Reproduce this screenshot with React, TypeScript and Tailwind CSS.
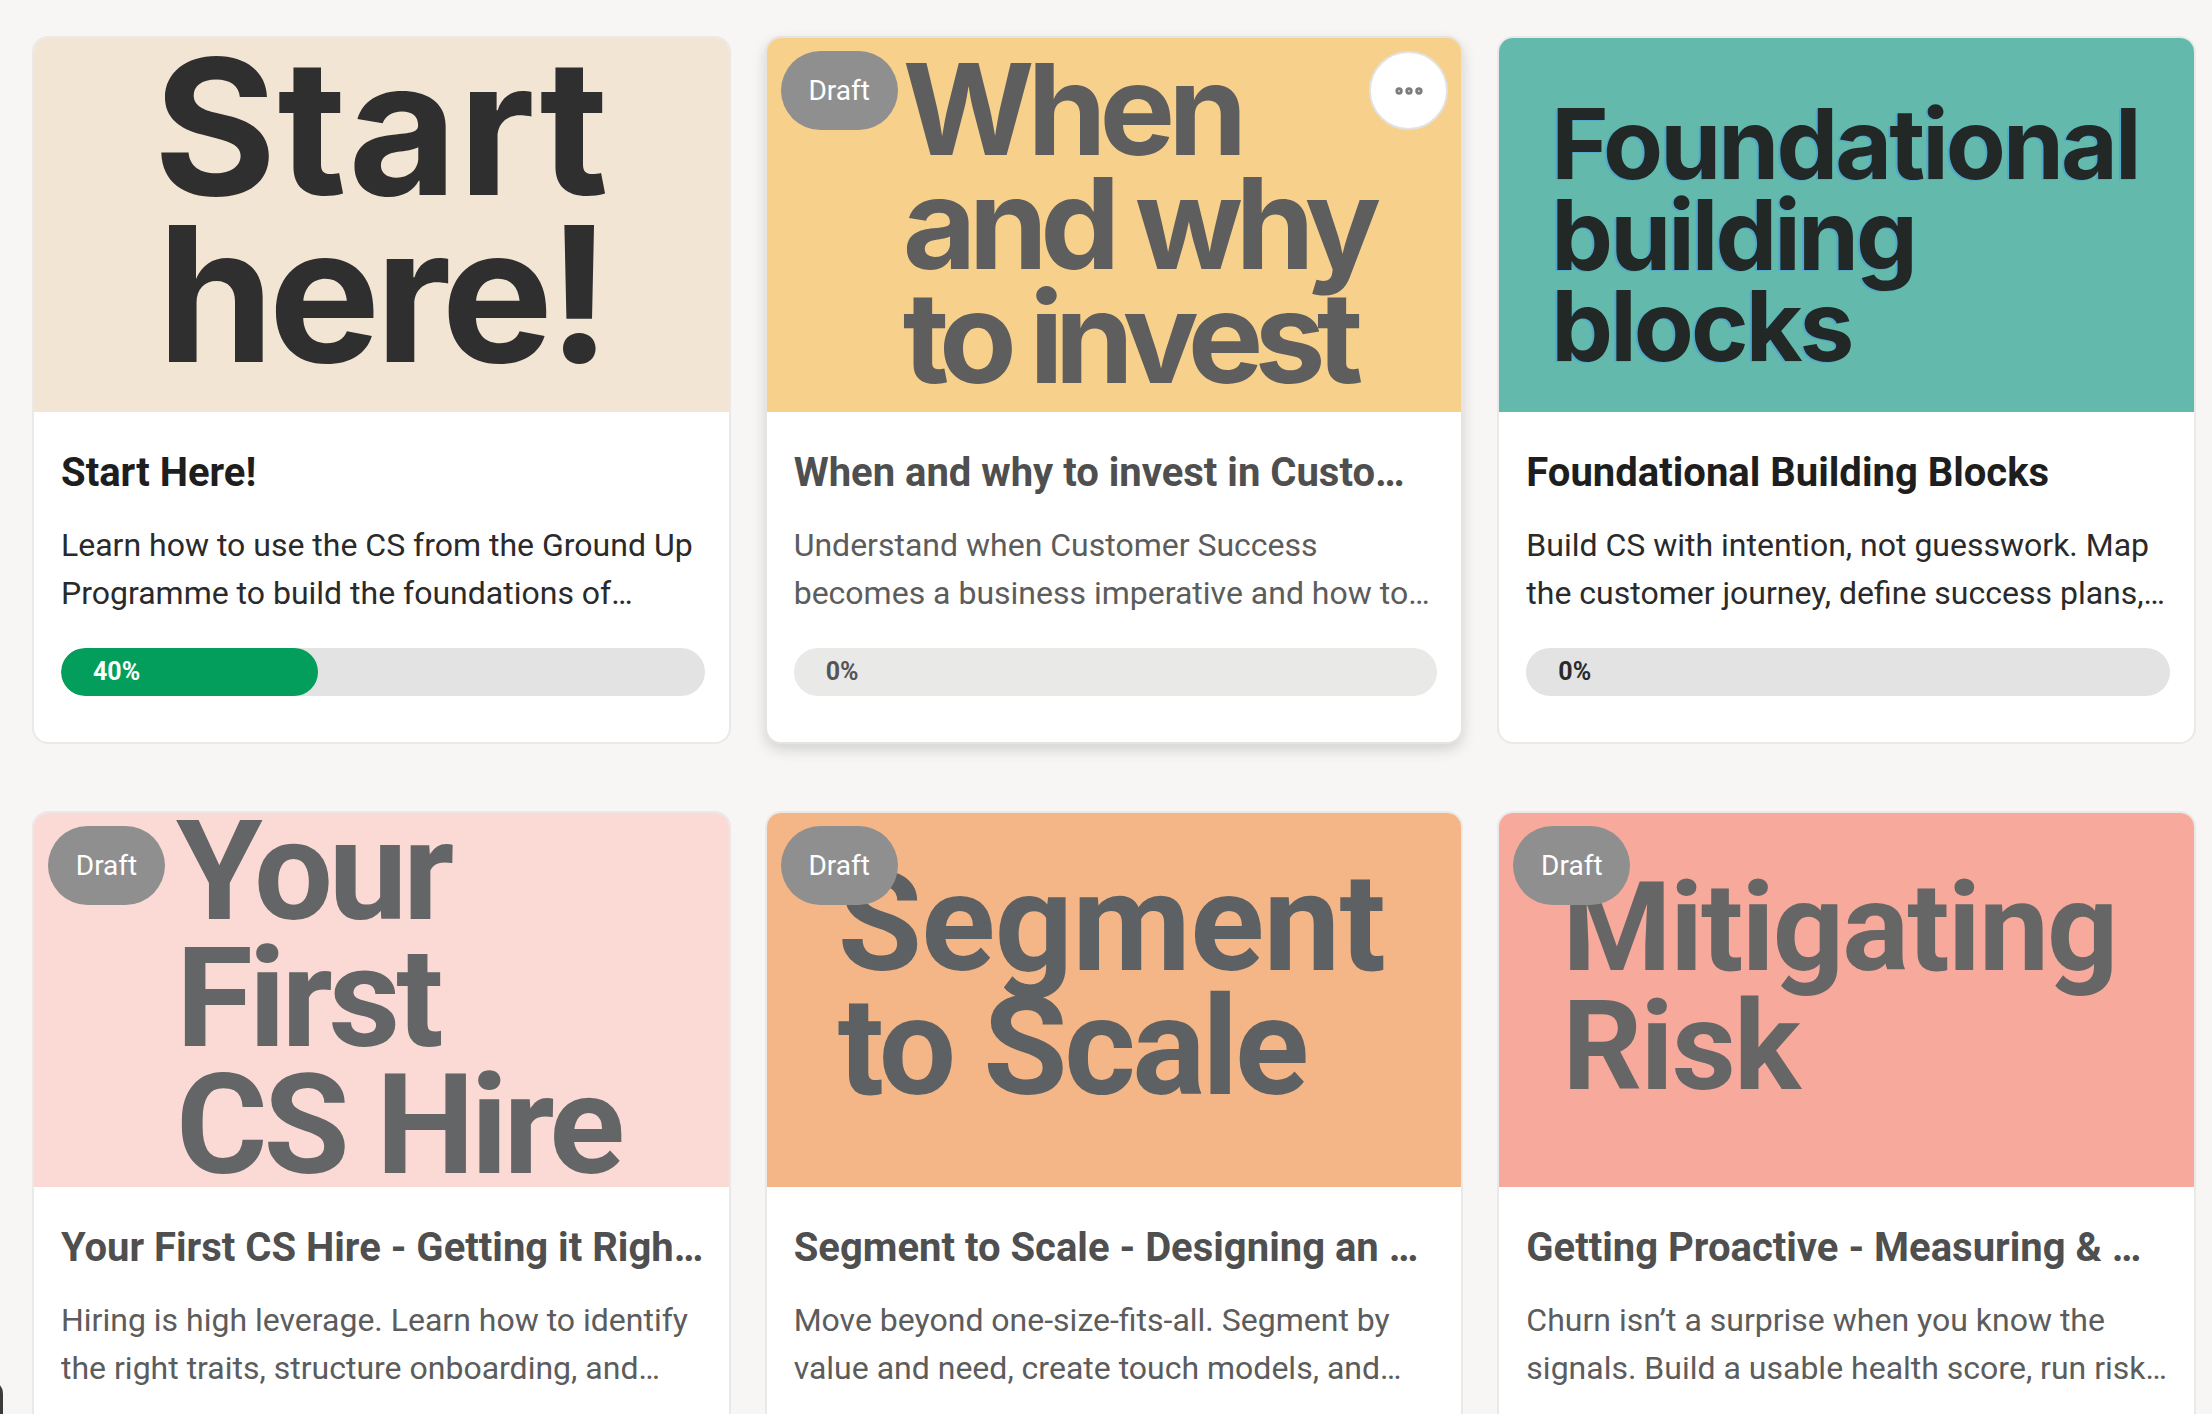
import { MoreHorizontal } from "lucide-react";

type Course = {
  title: string;
  desc: string;
  progress: number;
  draft: boolean;
  menu?: boolean;
  bg: string;
  lines: [string, string][];
  art: string;
};

const courses: Course[] = [
  {
    title: "Start Here!",
    desc: "Learn how to use the CS from the Ground Up Programme to build the foundations of\u2026",
    progress: 40,
    draft: false,
    bg: "bg-[#f3e5d4]",
    lines: [
      ["Start", "tracking-[0.005em]"],
      ["here!", ""],
    ],
    art: "pt-[5px] text-center font-['Inter'] text-[188px] leading-[167px] font-bold tracking-[-0.03em] text-[#2f2f2f]",
  },
  {
    title: "When and why to invest in Customer Success",
    desc: "Understand when Customer Success becomes a business imperative and how to\u2026",
    progress: 0,
    draft: true,
    menu: true,
    bg: "bg-[#f7d08b]",
    lines: [
      ["When", ""],
      ["and why", "tracking-[-0.06em]"],
      ["to invest", "tracking-[-0.07em]"],
    ],
    art: "pt-[14px] pl-[136px] font-['Inter'] text-[127px] leading-[114px] font-bold tracking-[-0.055em] text-[#5e5e5e]",
  },
  {
    title: "Foundational Building Blocks",
    desc: "Build CS with intention, not guesswork. Map the customer journey, define success plans,\u2026",
    progress: 0,
    draft: false,
    bg: "bg-[#62b9ac]",
    lines: [
      ["Foundational", ""],
      ["building", ""],
      ["blocks", ""],
    ],
    art: "pt-[60px] pl-[52px] font-['Inter'] text-[98px] leading-[91px] font-bold tracking-[-0.03em] text-[#222826] [text-shadow:-2px_1px_0_#52a9cc]",
  },
  {
    title: "Your First CS Hire - Getting it Right the First Time",
    desc: "Hiring is high leverage. Learn how to identify the right traits, structure onboarding, and\u2026",
    progress: 0,
    draft: true,
    bg: "bg-[#fbdad5]",
    lines: [
      ["Your", ""],
      ["First", ""],
      ["CS Hire", ""],
    ],
    art: "-mt-[5px] pl-[142px] font-['Roboto'] text-[140px] leading-[127px] font-bold tracking-[-0.03em] text-[#636566]",
  },
  {
    title: "Segment to Scale - Designing an Engagement Model",
    desc: "Move beyond one-size-fits-all. Segment by value and need, create touch models, and\u2026",
    progress: 0,
    draft: true,
    bg: "bg-[#f5b687]",
    lines: [
      ["Segment", ""],
      ["to Scale", "tracking-[-0.025em]"],
    ],
    art: "pt-[48px] pl-[71px] font-['Roboto'] text-[137px] leading-[124px] font-bold tracking-[-0.005em] text-[#5e6163]",
  },
  {
    title: "Getting Proactive - Measuring & Mitigating Risk",
    desc: "Churn isn\u2019t a surprise when you know the signals. Build a usable health score, run risk\u2026",
    progress: 0,
    draft: true,
    bg: "bg-[#f7a99c]",
    lines: [
      ["Mitigating", ""],
      ["Risk", ""],
    ],
    art: "pt-[55px] pl-[63px] font-['Roboto'] text-[125px] leading-[119px] font-bold tracking-[-0.015em] text-[#666666]",
  },
];

function ProgressBar({ value, draft }: { value: number; draft: boolean }) {
  return (
    <div
      className={
        "relative flex h-[48px] w-full items-center overflow-hidden rounded-full pl-[32px] " +
        (draft ? "bg-[#e9e9e8]" : "bg-[#e3e3e3]")
      }
    >
      {value > 0 && (
        <div
          className="absolute inset-y-0 left-0 rounded-full bg-[#039e5b]"
          style={{ width: `${value}%` }}
        />
      )}
      <span
        className={
          "relative text-[25px] font-bold " +
          (value > 0 ? "text-white" : draft ? "text-[#555555]" : "text-[#2a2a2a]")
        }
      >
        {value}%
      </span>
    </div>
  );
}

function CourseCard({ c }: { c: Course }) {
  return (
    <div
      className={
        "relative flex flex-col overflow-hidden rounded-[16px] border-2 bg-white " +
        (c.menu
          ? "border-[#e4e4e4] shadow-[0_6px_14px_rgba(0,0,0,0.14)]"
          : "border-[#e9e9e9]")
      }
    >
      <div className={"h-[374px] overflow-hidden " + c.bg}>
        <div className={c.art}>
          {c.lines.map(([l, cls]) => (
            <div key={l} className={"whitespace-nowrap " + cls}>
              {l}
            </div>
          ))}
        </div>
      </div>

      <div className="flex flex-col pt-[38px] pr-[24px] pb-[46px] pl-[27px]">
        <h3
          className={
            "truncate text-[40px] leading-[46px] font-bold " +
            (c.draft ? "text-[#4f4f4f]" : "text-[#1e1e1e]")
          }
        >
          {c.title}
        </h3>
        <p
          className={
            "mt-[25px] line-clamp-2 h-[96px] text-[32px] leading-[48px] " +
            (c.draft ? "text-[#5c5c5c]" : "text-[#2a2a2a]")
          }
        >
          {c.desc}
        </p>
        <div className="mt-[31px]">
          <ProgressBar value={c.progress} draft={c.draft} />
        </div>
      </div>

      {c.draft && (
        <span className="absolute top-[13px] left-[14px] flex h-[79px] w-[117px] items-center justify-center rounded-full bg-[#8f8f8f] text-[28px] text-white">
          Draft
        </span>
      )}
      {c.menu && (
        <button className="absolute top-[13px] right-[13px] flex h-[79px] w-[79px] items-center justify-center rounded-full border-2 border-[#e2e2e2] bg-white text-[#7d7d7d]">
          <MoreHorizontal size={34} strokeWidth={3.2} />
        </button>
      )}
    </div>
  );
}

export default function App() {
  return (
    <div className="min-h-screen bg-[#f7f6f4] pt-[36px] pr-[16px] pl-[32px] font-['Roboto',sans-serif]">
      <div className="grid grid-cols-3 gap-x-[34px] gap-y-[67px]">
        {courses.map((c) => (
          <CourseCard key={c.title} c={c} />
        ))}
      </div>
      <div className="fixed bottom-[-24px] left-[-52px] h-[58px] w-[55px] rounded-[14px] bg-[#3b3b3b]" />
    </div>
  );
}
